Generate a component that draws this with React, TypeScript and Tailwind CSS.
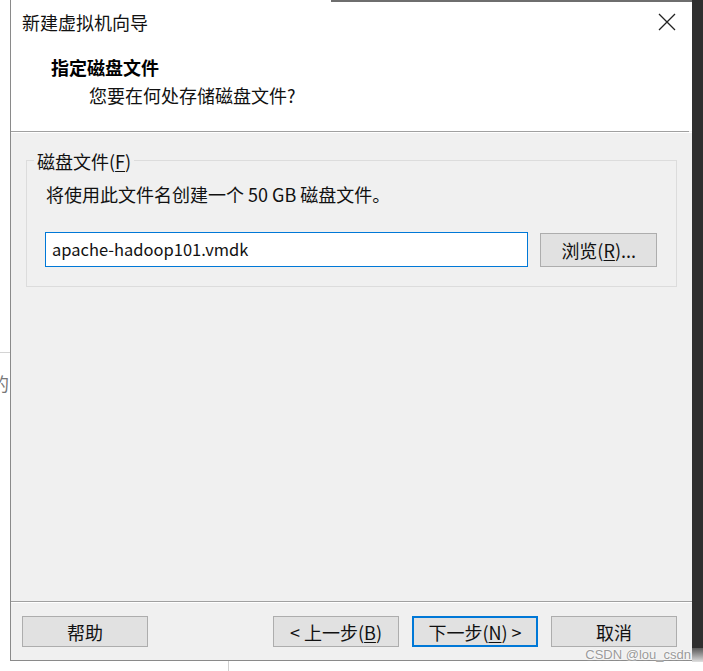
import React from 'react';

const cjk = { fontFamily: '"Noto Sans CJK SC", "Noto Sans", sans-serif' };

const U: React.FC<{ c: string }> = ({ c }) => <span className="underline underline-offset-2">{c}</span>;

const Btn: React.FC<{ children: React.ReactNode; primary?: boolean }> = ({ children, primary }) => (
  <div
    className={`w-[126px] h-[31px] flex items-center justify-center text-[18px] leading-none text-[#111] bg-[#e1e1e1] ${
      primary ? 'border-2 border-[#0078d7]' : 'border border-[#adadad]'
    }`}
  >
    {children}
  </div>
);

const App: React.FC = () => {
  return (
    <div className="w-[703px] h-[671px] bg-white flex overflow-hidden relative" style={cjk}>
      {/* page behind, left edge */}
      <div className="w-[10px] shrink-0 flex flex-col">
        <div className="h-[352px]" />
        <div className="h-px bg-[#d4d4d4]" />
        <div className="h-[20px]" />
        <div className="text-[18px] leading-[20px] text-[#777] -ml-[9px] whitespace-nowrap">的</div>
      </div>

      {/* dialog + bottom strip */}
      <div className="w-[682px] shrink-0 flex flex-col">
        <div className="h-[661px] flex flex-col border-l border-b border-[#8a8a8a] bg-[#f0f0f0]">
          {/* header */}
          <div className="h-[131px] bg-white flex flex-col">
            <div className="flex h-[2px]">
              <div className="w-[320px]" />
              <div className="flex-1 bg-[#6e6e6e]" />
            </div>
            <div className="flex items-center h-[40px] pl-[11px] pr-[16px]">
              <span className="text-[18px] leading-none text-[#111]">新建虚拟机向导</span>
              <div className="flex-1" />
              <svg width="18" height="18" viewBox="0 0 18 18">
                <path d="M1 1 L17 17 M17 1 L1 17" stroke="#222" strokeWidth="1.3" />
              </svg>
            </div>
            <div className="pl-[40px] mt-[14px] text-[18px] leading-[22px] font-bold text-black">指定磁盘文件</div>
            <div className="pl-[78px] mt-[6px] text-[18px] leading-[22px] text-[#111]">您要在何处存储磁盘文件?</div>
          </div>
          <div className="h-px bg-[#a0a0a0] mr-[3px]" />
          <div className="h-px bg-white" />

          {/* body */}
          <div className="flex-1 flex flex-col px-[15px] pt-[18px]">
            <div className="flex flex-col">
              <div className="flex items-end h-[20px]">
                <div className="w-[8px] h-[11px] border-t border-l border-[#dcdcdc]" />
                <span className="px-[3px] text-[18px] leading-[20px] text-[#111]">
                  磁盘文件(<U c="F" />)
                </span>
                <div className="flex-1 h-[11px] border-t border-r border-[#dcdcdc]" />
              </div>
              <div className="h-[116px] border-l border-r border-b border-[#dcdcdc] flex flex-col pl-[18px] pr-[19px]">
                <div className="mt-[12px] pl-[1px] text-[18px] leading-[22px] text-[#111]">将使用此文件名创建一个 50 GB 磁盘文件。</div>
                <div className="mt-[27px] flex items-center gap-[12px]">
                  <div className="w-[485px] h-[35px] bg-white border border-[#0078d7] flex items-center pl-[6px] text-[16.5px] text-[#111]">
                    apache-hadoop101.vmdk
                  </div>
                  <div className="w-[117px] h-[34px] bg-[#e1e1e1] border border-[#adadad] flex items-center justify-center text-[18px] leading-none text-[#111]">
                    浏览(<U c="R" />)...
                  </div>
                </div>
              </div>
            </div>
          </div>

          {/* footer */}
          <div className="h-px bg-[#a0a0a0]" />
          <div className="h-px bg-white" />
          <div className="h-[57px] flex items-start pt-[13px] pl-[11px] pr-[15px]">
            <Btn>帮助</Btn>
            <div className="flex-1" />
            <div className="flex gap-[13px]">
              <Btn>&lt; 上一步(<U c="B" />)</Btn>
              <Btn primary>下一步(<U c="N" />) &gt;</Btn>
              <Btn>取消</Btn>
            </div>
          </div>
        </div>
        <div className="flex-1 flex">
          <div className="w-[218px]" />
          <div className="w-px bg-[#d0d0d0]" />
        </div>
      </div>

      {/* dark area on the right */}
      <div className="flex-1 flex flex-col">
        <div className="h-[648px] bg-[#2f2f2f]" />
        <div className="h-[14px] bg-gradient-to-b from-[#5a5a5a] to-[#e0e0e0]" />
        <div className="flex-1 bg-white" />
      </div>

      {/* watermark */}
      <div
        className="absolute right-[12px] bottom-[10px] text-[13px] leading-none text-[#9a9a9a]"
        style={{ fontFamily: '"Liberation Sans", sans-serif', textShadow: '0 0 2px #fff, 0 0 2px #fff' }}
      >
        CSDN @lou_csdn
      </div>
    </div>
  );
};

export default App;
